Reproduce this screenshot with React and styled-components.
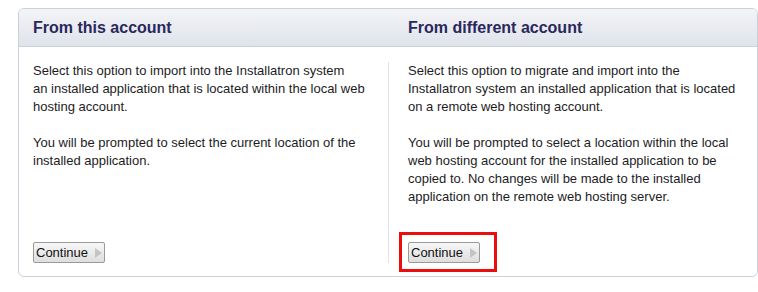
import React from "react";
import styled, { createGlobalStyle } from "styled-components";

const Global = createGlobalStyle`
  html, body { margin: 0; padding: 0; background: #fff; }
  body { font-family: "Liberation Sans", Arial, sans-serif; }
`;

const Page = styled.div`
  padding: 8px 0 0 18px;
`;

const Panel = styled.section`
  box-sizing: border-box;
  width: 740px;
  height: 269px;
  border: 1px solid #c9d0da;
  border-radius: 6px;
  overflow: hidden;
  display: flex;
  flex-direction: column;
  background: #fff;
`;

const HeaderRow = styled.div`
  display: grid;
  grid-template-columns: 369px 1fr;
  height: 37px;
  border-bottom: 1px solid #c9d0da;
  background: linear-gradient(#f3f4f7, #dfe3ea);
`;

const HeaderCell = styled.h2`
  margin: 0;
  display: flex;
  align-items: center;
  padding-left: ${(p) => (p.$right ? "20px" : "14px")};
  font-size: 16px;
  font-weight: bold;
  color: #2a285c;
`;

const BodyRow = styled.div`
  flex: 1;
  display: grid;
  grid-template-columns: 369px 1fr;
  padding: 15px 0 13px;
`;

const Column = styled.div`
  display: flex;
  flex-direction: column;
  justify-content: space-between;
  padding-left: ${(p) => (p.$right ? "19px" : "14px")};
  border-left: ${(p) => (p.$right ? "1px solid #dfe3ea" : "none")};
`;

const Text = styled.div`
  font-size: 13px;
  line-height: 18px;
  color: #1c1c24;
  white-space: nowrap;
  p { margin: 0 0 18px; }
  p:last-child { margin-bottom: 0; }
`;

const ButtonWrap = styled.div`
  position: relative;
  align-self: flex-start;
`;

const Highlight = styled.div`
  position: absolute;
  left: -9px;
  top: -10px;
  right: -17px;
  bottom: -9px;
  border: 3px solid #ec0d0d;
  pointer-events: none;
`;

const Button = styled.button`
  box-sizing: border-box;
  width: 72px;
  height: 21px;
  padding: 0 0 0 2px;
  display: flex;
  align-items: center;
  gap: 7px;
  font-family: "Liberation Sans", Arial, sans-serif;
  font-size: 13px;
  color: #111;
  border: 1px solid #9a9a9a;
  border-radius: 2px;
  background: linear-gradient(#f7f7f7, #dedede);
  cursor: pointer;
`;

const Arrow = styled.span`
  width: 0;
  height: 0;
  border-top: 5px solid transparent;
  border-bottom: 5px solid transparent;
  border-left: 7px solid #c4c4c4;
`;

function Continue() {
  return (
    <Button type="button">
      Continue
      <Arrow />
    </Button>
  );
}

export default function App() {
  return (
    <>
      <Global />
      <Page>
        <Panel>
          <HeaderRow>
            <HeaderCell>From this account</HeaderCell>
            <HeaderCell $right>From different account</HeaderCell>
          </HeaderRow>
          <BodyRow>
            <Column>
              <Text>
                <p>
                  Select this option to import into the Installatron system
                  <br />
                  an installed application that is located within the local web
                  <br />
                  hosting account.
                </p>
                <p>
                  You will be prompted to select the current location of the
                  <br />
                  installed application.
                </p>
              </Text>
              <ButtonWrap>
                <Continue />
              </ButtonWrap>
            </Column>
            <Column $right>
              <Text>
                <p>
                  Select this option to migrate and import into the
                  <br />
                  Installatron system an installed application that is located
                  <br />
                  on a remote web hosting account.
                </p>
                <p>
                  You will be prompted to select a location within the local
                  <br />
                  web hosting account for the installed application to be
                  <br />
                  copied to. No changes will be made to the installed
                  <br />
                  application on the remote web hosting server.
                </p>
              </Text>
              <ButtonWrap>
                <Continue />
                <Highlight />
              </ButtonWrap>
            </Column>
          </BodyRow>
        </Panel>
      </Page>
    </>
  );
}
